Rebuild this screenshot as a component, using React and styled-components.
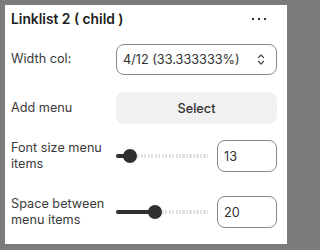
import { createGlobalStyle } from "styled-components";
import styled from "styled-components";

const GlobalStyle = createGlobalStyle`
    html, body {
        margin: 0;
        padding: 0;
        background: #7b7b7b;
    }
    body {
        font-family: Inter, "Noto Sans", sans-serif;
        -webkit-font-smoothing: antialiased;
    }
`

const Frame = styled.div`
    width: 292px;
    height: 250px;
    padding: 5px 5px 6px 5px;
    box-sizing: border-box;
    background: #7b7b7b;
`
const Panel = styled.div`
    background: #ffffff;
    height: 100%;
    box-sizing: border-box;
    padding: 4px 10px 0 5px;
    display: flex;
    flex-direction: column;
`
const Header = styled.div`
    display: flex;
    align-items: center;
    justify-content: space-between;
    height: 20px;
    padding-right: 11px;
`
const Title = styled.h2`
    margin: 0;
    font-size: 13.8px;
    font-weight: 600;
    color: #202020;
    padding-left: 1px;
`
const MoreButton = styled.button`
    border: 0;
    background: none;
    padding: 0;
    display: flex;
    cursor: pointer;
`
const Row = styled.div`
    display: grid;
    grid-template-columns: 106px 1fr;
    align-items: center;
    min-height: 32px;
    margin-top: ${({ $gap }) => $gap}px;
`
const Label = styled.label`
    font-size: 12.7px;
    line-height: 16px;
    color: #3a3a3a;
    padding-left: 1px;
`
const SelectBox = styled.div`
    height: 31px;
    box-sizing: border-box;
    border: 1px solid #8a8a8a;
    border-radius: 8px;
    display: flex;
    align-items: center;
    justify-content: space-between;
    padding: 0 11px 0 6px;
    font-size: 12.7px;
    color: #303030;
`
const GrayButton = styled.button`
    height: 32px;
    border: 0;
    border-radius: 8px;
    background: #f1f1f1;
    font-family: inherit;
    font-size: 12.7px;
    font-weight: 500;
    color: #303030;
`
const RangeLine = styled.div`
    display: flex;
    align-items: center;
    gap: 9px;
`
const Track = styled.div`
    position: relative;
    width: 92px;
    height: 4px;
    background: repeating-linear-gradient(90deg, #e3e3e3 0 2px, transparent 2px 3.5px);
`
const Fill = styled.div`
    height: 100%;
    background: #303030;
    border-radius: 2px;
`
const Thumb = styled.div`
    position: absolute;
    top: 50%;
    width: 14px;
    height: 14px;
    margin: -7px 0 0 -7px;
    border-radius: 50%;
    background: #303030;
`
const NumberBox = styled.div`
    width: 60px;
    height: 32px;
    box-sizing: border-box;
    border: 1px solid #8a8a8a;
    border-radius: 8px;
    display: flex;
    align-items: center;
    padding-left: 6px;
    font-size: 12.7px;
    color: #303030;
`

const Dots = () => (
    <svg width="14" height="4" viewBox="0 0 14 4">
        <rect x="0" y="1" width="2" height="2" fill="#303030" />
        <rect x="6" y="1" width="2" height="2" fill="#303030" />
        <rect x="12" y="1" width="2" height="2" fill="#303030" />
    </svg>
)

const Chevrons = () => (
    <svg width="8" height="11" viewBox="0 0 8 11" fill="none" stroke="#4a4a4a" strokeWidth="1.2" strokeLinecap="round" strokeLinejoin="round">
        <path d="M1.5 3.5 L4 1 L6.5 3.5" />
        <path d="M1.5 7.5 L4 10 L6.5 7.5" />
    </svg>
)

const Slider = ({ at, value }) => (
    <RangeLine>
        <Track>
            <Fill style={{ width: at }} />
            <Thumb style={{ left: at }} />
        </Track>
        <NumberBox>{value}</NumberBox>
    </RangeLine>
)

const App = () => {
    return (<>
        <GlobalStyle />
        <Frame>
            <Panel>
                <Header>
                    <Title>Linklist 2 ( child )</Title>
                    <MoreButton><Dots /></MoreButton>
                </Header>
                <Row $gap={14}>
                    <Label>Width col:</Label>
                    <SelectBox>
                        <span>4/12 (33.333333%)</span>
                        <Chevrons />
                    </SelectBox>
                </Row>
                <Row $gap={17}>
                    <Label>Add menu</Label>
                    <GrayButton>Select</GrayButton>
                </Row>
                <Row $gap={16}>
                    <Label>Font size menu items</Label>
                    <Slider at={14} value="13" />
                </Row>
                <Row $gap={24}>
                    <Label>Space between menu items</Label>
                    <Slider at={39} value="20" />
                </Row>
            </Panel>
        </Frame>
    </>)
}

export default App;
